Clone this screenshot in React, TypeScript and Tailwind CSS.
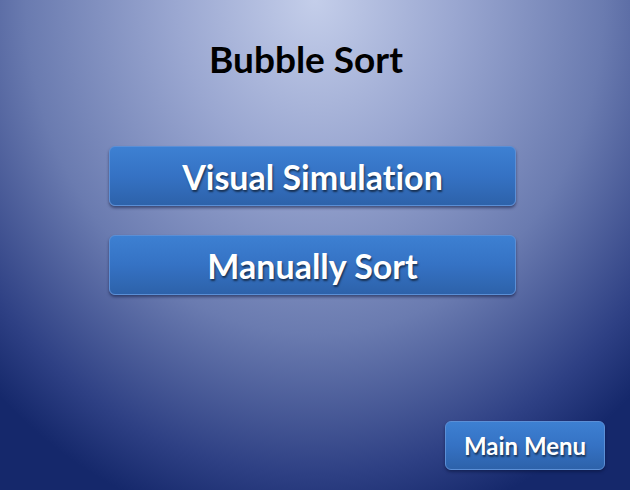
const btn =
  "flex items-center justify-center rounded-md border border-[#5b8fd6] bg-[linear-gradient(180deg,#3d80d2_0%,#3572c4_50%,#2d62aa_100%)] text-white font-bold shadow-[0_2px_3px_rgba(10,20,60,0.55)] [text-shadow:1px_2px_2px_rgba(0,0,0,0.55)] [font-variant-ligatures:none]";

const App = () => {
  return (
    <div className="w-[630px] h-[490px] flex flex-col bg-[radial-gradient(ellipse_74%_110%_at_50%_0%,#c4ceea_0%,#9aa7d1_30%,#6a7bb0_62%,#2e4084_88%,#15286b_100%)] font-['Lato',sans-serif]">
      <div className="mt-[35px] ml-[209px] text-[37px] font-bold text-black leading-[48px] [font-variant-ligatures:none]">Bubble Sort</div>

      <div className="mt-[63px] ml-[109px] flex flex-col gap-[29px]">
        <div className={`${btn} w-[407px] h-[60px] text-[34px]`}>Visual Simulation</div>
        <div className={`${btn} w-[407px] h-[60px] text-[34px]`}>Manually Sort</div>
      </div>

      <div className="mt-auto mb-[20px] self-end mr-[25px]">
        <div className={`${btn} w-[160px] h-[49px] text-[24px] rounded-lg`}>Main Menu</div>
      </div>
    </div>
  );
};

export default App;
